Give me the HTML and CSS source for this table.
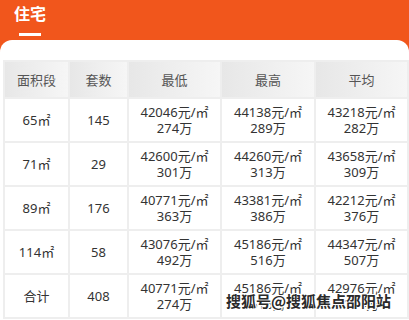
FILE: index.html
```html
<!DOCTYPE html>
<html lang="zh">
<head>
<meta charset="utf-8">
<link rel="stylesheet" href="styles.css">
</head>
<body>
<div class="page">
  <header class="top">
    <h1 class="title">住宅</h1>
    <span class="underline"></span>
  </header>
  <section class="card">
    <table class="grid">
      <colgroup>
        <col class="c1"><col class="c2"><col class="c3"><col class="c4"><col class="c5">
      </colgroup>
      <thead>
        <tr><th>面积段</th><th>套数</th><th>最低</th><th>最高</th><th>平均</th></tr>
      </thead>
      <tbody>
        <tr><td>65㎡</td><td>145</td><td>42046元/㎡<br>274万</td><td>44138元/㎡<br>289万</td><td>43218元/㎡<br>282万</td></tr>
        <tr><td>71㎡</td><td>29</td><td>42600元/㎡<br>301万</td><td>44260元/㎡<br>313万</td><td>43658元/㎡<br>309万</td></tr>
        <tr><td>89㎡</td><td>176</td><td>40771元/㎡<br>363万</td><td>43381元/㎡<br>386万</td><td>42212元/㎡<br>376万</td></tr>
        <tr><td>114㎡</td><td>58</td><td>43076元/㎡<br>492万</td><td>45186元/㎡<br>516万</td><td>44347元/㎡<br>507万</td></tr>
        <tr><td>合计</td><td>408</td><td>40771元/㎡<br>274万</td><td>45186元/㎡<br>516万</td><td>42976元/㎡<br>274万</td></tr>
      </tbody>
    </table>
    <div class="watermark">搜狐号@搜狐焦点邵阳站</div>
  </section>
</div>
</body>
</html>
```

FILE: styles.css
```css
html, body {
  margin: 0;
  padding: 0;
  background: #ffffff;
}
body {
  font-family: "Noto Sans", "Noto Sans CJK SC", sans-serif;
  width: 409px;
  height: 320px;
  overflow: hidden;
}
.page {
  background: #f1561c;
  width: 409px;
}
.top {
  height: 40px;
  padding-left: 14px;
  box-sizing: border-box;
}
.title {
  margin: 0;
  padding-top: 3px;
  font-size: 16px;
  line-height: 20px;
  font-weight: 700;
  color: #ffffff;
  font-family: "Noto Sans CJK SC", sans-serif;
}
.underline {
  display: block;
  margin-top: 10px;
  margin-left: 5px;
  width: 22px;
  height: 3px;
  background: #ffffff;
}
.card {
  background: #ffffff;
  border-radius: 12px 12px 0 0;
  padding: 20px 2px 0 3px;
  height: 280px;
  box-sizing: border-box;
  position: relative;
}
.grid {
  border-collapse: collapse;
  table-layout: fixed;
  width: 404px;
  font-size: 13px;
  color: #333333;
}
.c1 { width: 65px; }
.c2 { width: 59px; }
.c3 { width: 93px; }
.c4 { width: 94px; }
.c5 { width: 93px; }
.grid th, .grid td {
  border: 2px solid #eeeeee;
  text-align: center;
  padding: 0;
}
.grid th {
  height: 35px;
  font-weight: 400;
  color: #555555;
  background: linear-gradient(to right, #e7e7e7, #f6f6f6);
}
.grid td {
  height: 42px;
  line-height: 16px;
}
.watermark {
  position: absolute;
  left: 226px;
  top: 250px;
  font-family: "Noto Sans CJK SC", sans-serif;
  font-size: 15px;
  font-weight: 700;
  color: #2a2a2a;
  text-shadow: 1px 0 0 #fff, -1px 0 0 #fff, 0 1px 0 #fff, 0 -1px 0 #fff, 1px 1px 0 #fff, -1px -1px 0 #fff, 1px -1px 0 #fff, -1px 1px 0 #fff;
}
```
